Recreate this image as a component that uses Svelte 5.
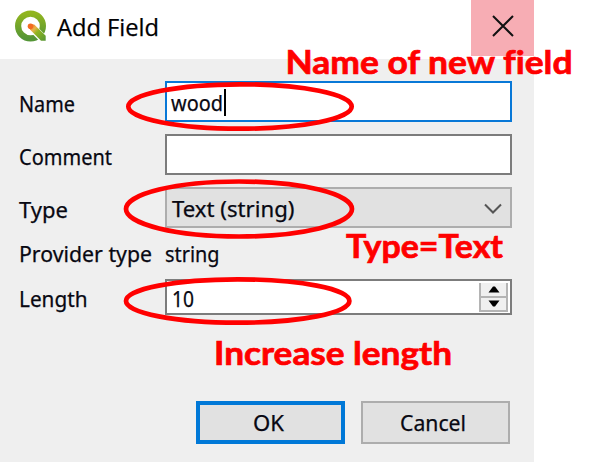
<script>
  const notes = [
    { text: 'Name of new field', x: 285.5, y: 73.5, width: 287 },
    { text: 'Type=Text', x: 346, y: 257.5, width: 157 },
    { text: 'Increase length', x: 214, y: 364.5, width: 238 }
  ];
  const rings = [
    { cx: 240, cy: 106.5, rx: 111.7, ry: 22.2 },
    { cx: 239, cy: 209, rx: 113, ry: 27.5 },
    { cx: 237.7, cy: 301, rx: 111.7, ry: 21.7 }
  ];
</script>

{#snippet label(text, width, baseline, height, family = 'body')}
  <svg class="label {family}" width={width} height={height}>
    <text x="0" y={baseline} textLength={width} lengthAdjust="spacingAndGlyphs">{text}</text>
  </svg>
{/snippet}

<div class="stage">
  <div class="dialog">
    <header>
      <svg class="logo" width="34" height="34" viewBox="0 0 34 34">
        <defs>
          <linearGradient id="ring" x1="0" y1="0" x2="0" y2="1">
            <stop offset="0" stop-color="#91b51f" />
            <stop offset="1" stop-color="#549536" />
          </linearGradient>
          <linearGradient id="tail" x1="0" y1="0" x2="1" y2="1">
            <stop offset="0" stop-color="#f36b21" />
            <stop offset=".3" stop-color="#e9b24a" />
            <stop offset=".48" stop-color="#91b51f" />
            <stop offset="1" stop-color="#549536" />
          </linearGradient>
        </defs>
        <circle cx="16.5" cy="16" r="12.4" fill="none" stroke="url(#ring)" stroke-width="6.2" />
        <path d="M17 16.5 29.2 28.7" stroke="#fff" stroke-width="8.4" />
        <path d="M16.5 14.2 20.2 14.4 31.7 25.8V30.8H27L16 19.5 15 16Z" fill="url(#tail)" />
        <circle cx="16.5" cy="16.2" r="2.8" fill="#f36b21" />
      </svg>
      <span class="title">{@render label('Add Field', 102, 36.3, 58, 'heading')}</span>
      <button class="close" aria-label="Close">
        <svg width="22" height="22" viewBox="0 0 22 22"><path d="M1 1 21 21M21 1 1 21" stroke="#111" stroke-width="2" /></svg>
      </button>
    </header>

    <main>
      <div class="row">
        <div class="name">{@render label('Name', 56, 30.5, 41)}</div>
        <div class="field active">{@render label('wood', 52, 28, 37)}<i class="caret"></i></div>
      </div>
      <div class="row">
        <div class="name">{@render label('Comment', 93, 30.5, 41)}</div>
        <div class="field"></div>
      </div>
      <div class="row">
        <div class="name">{@render label('Type', 49, 30.5, 41)}</div>
        <div class="field combo">
          {@render label('Text (string)', 122.5, 28, 37)}
          <svg class="chevron" width="18" height="12" viewBox="0 0 18 12"><path d="M1 1.5 9 9.5 17 1.5" fill="none" stroke="#555" stroke-width="2" /></svg>
        </div>
      </div>
      <div class="row provider">
        <div class="name">{@render label('Provider type', 133, 22.3, 30)}</div>
        <div class="value">{@render label('string', 54.5, 22.3, 30)}</div>
      </div>
      <div class="row length">
        <div class="name">{@render label('Length', 68.5, 28, 36)}</div>
        <div class="field spin">
          {@render label('10', 22, 26, 32)}
          <div class="steps">
            <span><svg width="12" height="7" viewBox="0 0 12 7"><path d="M.5 6.5 5 .5h2l4.5 6Z" /></svg></span>
            <span><svg width="12" height="7" viewBox="0 0 12 7"><path d="M.5.5 5 6.5h2l4.5-6Z" /></svg></span>
          </div>
        </div>
      </div>
      <footer>
        <button class="default">{@render label('OK', 31, 27, 37)}</button>
        <button>{@render label('Cancel', 66, 29, 41)}</button>
      </footer>
    </main>
  </div>

  <svg class="notes" width="605" height="462" viewBox="0 0 605 462">
    {#each rings as r}
      <ellipse cx={r.cx} cy={r.cy} rx={r.rx} ry={r.ry} />
    {/each}
    {#each notes as n}
      <text x={n.x} y={n.y} textLength={n.width} lengthAdjust="spacingAndGlyphs">{n.text}</text>
    {/each}
  </svg>
</div>

<style>
  .stage { position: relative; width: 605px; height: 462px; background: #fff; overflow: hidden; }
  .dialog { width: 534px; height: 462px; display: flex; flex-direction: column; background: #efefef; }
  header { height: 59px; flex: none; display: flex; align-items: flex-start; background: #fff; }
  .logo { margin: 10px 0 0 14px; }
  .title { margin-left: 9px; }
  .label { display: block; flex: none; overflow: visible; fill: #080812; stroke: #080812; stroke-width: .25px; }
  .body { font: 21.5px "Noto Sans", "Open Sans", sans-serif; }
  .heading { font: 24px "Open Sans", "Noto Sans", sans-serif; fill: #000; }
  button { box-sizing: border-box; padding: 0; display: flex; justify-content: center; align-items: center; border: 2px solid #adadad; background: #e1e1e1; }
  .close { width: 63px; height: 56px; margin-left: auto; border: 0; background: #f7adb4; align-items: flex-start; }
  .close svg { margin-top: 15px; }
  main { padding: 22px 22px 0 19px; display: flex; flex-direction: column; gap: 12px; }
  .row { display: flex; height: 41px; }
  .name { width: 146px; flex: none; }
  .field { box-sizing: border-box; flex: 1; display: flex; border: 2px solid #7c7c7c; background: #fff; padding-left: 4px; }
  .active { border-color: #0878d7; }
  .caret { width: 2px; height: 27px; margin: 6px 0 0 1px; background: #000; }
  .combo { background: #e1e1e1; border-color: #adadad; padding-left: 5px; }
  .chevron { margin: 14px 8px 0 auto; }
  .provider { height: 27px; }
  .length { height: 36px; }
  .spin { padding-left: 5px; }
  .steps { box-sizing: border-box; width: 29px; height: 29px; margin: 2px 2px 0 auto; display: flex; flex-direction: column; border: 2px solid #b4b4b4; border-top: 0; background: #f0f0f0; }
  .steps span { height: 14px; display: flex; align-items: center; justify-content: center; }
  .steps span:first-child { height: 15px; border-bottom: 2px solid #b4b4b4; }
  footer { margin-top: 74px; display: flex; justify-content: flex-end; gap: 16px; padding-right: 2px; }
  footer button { width: 149px; height: 43px; padding-right: 5px; }
  footer .default { border: 4px solid #0078d7; }
  .notes { position: absolute; inset: 0; pointer-events: none; fill: #f00; font: 700 32.5px Lato, Roboto, sans-serif; font-variant-ligatures: none; }
  .notes text { stroke: #f00; stroke-width: .7px; }
  .notes ellipse { fill: none; stroke: #f00; stroke-width: 4.7px; }
</style>
